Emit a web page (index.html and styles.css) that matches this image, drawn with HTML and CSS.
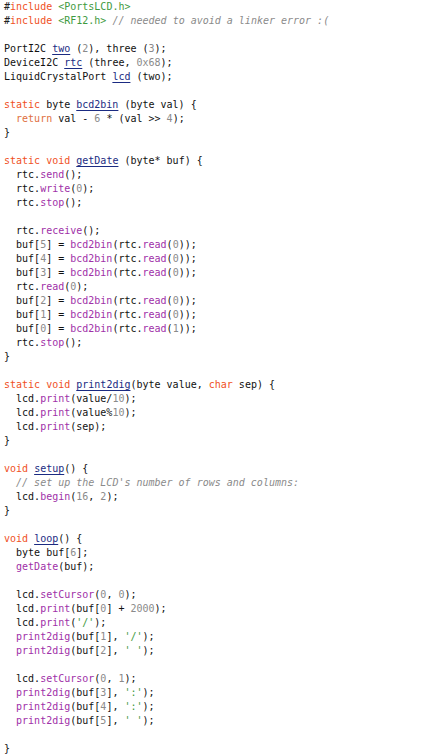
FILE: index.html
```html
<!DOCTYPE html>
<html>
<head>
<meta charset="utf-8">
<link rel="stylesheet" href="styles.css">
</head>
<body>
<pre class="code"><span class="pp">#<span class="kw">include</span></span> <span class="str">&lt;PortsLCD.h&gt;</span>
<span class="pp">#<span class="kw">include</span></span> <span class="str">&lt;RF12.h&gt;</span> <span class="cm">// needed to avoid a linker error :(</span>

PortI2C <span class="def">two</span> (<span class="num">2</span>), three (<span class="num">3</span>);
DeviceI2C <span class="def">rtc</span> (three, <span class="num">0x68</span>);
LiquidCrystalPort <span class="def">lcd</span> (two);

<span class="kw">static</span> byte <span class="def">bcd2bin</span> (byte val) {
  <span class="kw2">return</span> val - <span class="num">6</span> * (val &gt;&gt; <span class="num">4</span>);
}

<span class="kw">static</span> <span class="kw">void</span> <span class="def">getDate</span> (byte* buf) {
  rtc.<span class="fn">send</span>();
  rtc.<span class="fn">write</span>(<span class="num">0</span>);
  rtc.<span class="fn">stop</span>();

  rtc.<span class="fn">receive</span>();
  buf[<span class="num">5</span>] = <span class="fn">bcd2bin</span>(rtc.<span class="fn">read</span>(<span class="num">0</span>));
  buf[<span class="num">4</span>] = <span class="fn">bcd2bin</span>(rtc.<span class="fn">read</span>(<span class="num">0</span>));
  buf[<span class="num">3</span>] = <span class="fn">bcd2bin</span>(rtc.<span class="fn">read</span>(<span class="num">0</span>));
  rtc.<span class="fn">read</span>(<span class="num">0</span>);
  buf[<span class="num">2</span>] = <span class="fn">bcd2bin</span>(rtc.<span class="fn">read</span>(<span class="num">0</span>));
  buf[<span class="num">1</span>] = <span class="fn">bcd2bin</span>(rtc.<span class="fn">read</span>(<span class="num">0</span>));
  buf[<span class="num">0</span>] = <span class="fn">bcd2bin</span>(rtc.<span class="fn">read</span>(<span class="num">1</span>));
  rtc.<span class="fn">stop</span>();
}

<span class="kw">static</span> <span class="kw">void</span> <span class="def">print2dig</span>(byte value, <span class="kw">char</span> sep) {
  lcd.<span class="fn">print</span>(value/<span class="num">10</span>);
  lcd.<span class="fn">print</span>(value%<span class="num">10</span>);
  lcd.<span class="fn">print</span>(sep);
}

<span class="kw">void</span> <span class="def">setup</span>() {
  <span class="cm">// set up the LCD's number of rows and columns:</span>
  lcd.<span class="fn">begin</span>(<span class="num">16</span>, <span class="num">2</span>);
}

<span class="kw">void</span> <span class="def">loop</span>() {
  byte buf[<span class="num">6</span>];
  <span class="fn">getDate</span>(buf);

  lcd.<span class="fn">setCursor</span>(<span class="num">0</span>, <span class="num">0</span>);
  lcd.<span class="fn">print</span>(buf[<span class="num">0</span>] + <span class="num">2000</span>);
  lcd.<span class="fn">print</span>(<span class="str">'/'</span>);
  <span class="fn">print2dig</span>(buf[<span class="num">1</span>], <span class="str">'/'</span>);
  <span class="fn">print2dig</span>(buf[<span class="num">2</span>], <span class="str">' '</span>);

  lcd.<span class="fn">setCursor</span>(<span class="num">0</span>, <span class="num">1</span>);
  <span class="fn">print2dig</span>(buf[<span class="num">3</span>], <span class="str">':'</span>);
  <span class="fn">print2dig</span>(buf[<span class="num">4</span>], <span class="str">':'</span>);
  <span class="fn">print2dig</span>(buf[<span class="num">5</span>], <span class="str">' '</span>);

}</pre>
</body>
</html>
```
FILE: styles.css
```css
html, body {
  margin: 0;
  padding: 0;
  background: #ffffff;
}

.code {
  margin: 0;
  padding: 0 4px;
  font-family: "DejaVu Sans Mono", "Liberation Mono", monospace;
  font-size: 10px;
  line-height: 14px;
  color: #111111;
  white-space: pre;
}

.pp { color: #222222; }
.kw { color: #f0501e; }
.kw2 { color: #e0703e; }
.str { color: #3e9a3e; }
.cm { color: #8a8a8a; font-style: italic; }
.num { color: #8a8a8a; }
.fn { color: #a030a8; }
.def {
  color: #1b2b82;
  text-decoration: underline;
  text-decoration-color: #1b2b82;
  text-underline-offset: 2px;
}
```
